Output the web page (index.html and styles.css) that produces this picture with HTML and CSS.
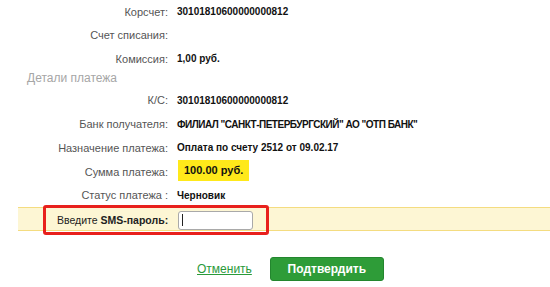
FILE: index.html
```html
<!DOCTYPE html>
<html lang="ru">
<head>
    <meta charset="UTF-8">
    <title>Подтверждение платежа</title>
    <link rel="stylesheet" href="styles.css">
</head>
<body>
    <div class="payment">
        <div class="rows rows-top">
            <div class="label">Корсчет:</div>
            <div class="value">30101810600000000812</div>
            <div class="label">Счет списания:</div>
            <div class="value"></div>
            <div class="label">Комиссия:</div>
            <div class="value">1,00 руб.</div>
        </div>

        <h2 class="section-title">Детали платежа</h2>

        <div class="rows">
            <div class="label">К/С:</div>
            <div class="value">30101810600000000812</div>
            <div class="label">Банк получателя:</div>
            <div class="value value-narrow">ФИЛИАЛ "САНКТ-ПЕТЕРБУРГСКИЙ" АО "ОТП БАНК"</div>
            <div class="label">Назначение платежа:</div>
            <div class="value">Оплата по счету 2512 от 09.02.17</div>
            <div class="label">Сумма платежа:</div>
            <div class="value"><span class="amount">100.00 руб.</span></div>
            <div class="label">Статус платежа :</div>
            <div class="value">Черновик</div>
        </div>

        <div class="sms-band">
            <div class="sms-box">
                <span class="sms-label">Введите <b>SMS-пароль:</b></span>
                <div class="sms-input"><span class="caret"></span></div>
            </div>
        </div>

        <div class="actions">
            <a href="#" class="cancel">Отменить</a>
            <button type="button" class="confirm">Подтвердить</button>
        </div>
    </div>
</body>
</html>
```

FILE: styles.css
```css
body {
    margin: 0;
    font-family: "Liberation Sans", Arial, sans-serif;
    background: #fff;
}
.payment {
    width: 550px;
}
.rows {
    display: grid;
    grid-template-columns: 168px 1fr;
    column-gap: 9px;
    grid-auto-rows: 23.75px;
    align-items: center;
}
.rows-top {
    grid-auto-rows: 23.5px;
}
.label {
    text-align: right;
    font-size: 11px;
    color: #555;
}
.value {
    font-size: 10px;
    font-weight: bold;
    color: #111;
    white-space: nowrap;
}
.value-narrow {
    letter-spacing: -0.5px;
}
.section-title {
    margin: -1px 0 3px 27px;
    font-size: 12px;
    line-height: 16px;
    font-weight: normal;
    color: #a6a6a6;
}
.amount {
    display: inline-block;
    margin-left: 1px;
    padding: 0 6px;
    line-height: 21px;
    font-size: 11px;
    background: #ffe91a;
    position: relative;
    top: -1px;
}
.sms-band {
    margin: 0 0 0 18px;
    height: 22px;
    display: flex;
    align-items: center;
    background: #fdf6d4;
    border-top: 1px solid #f4dc80;
    border-bottom: 1px solid #f4dc80;
}
.sms-box {
    margin-left: 25px;
    margin-top: 2px;
    height: 24px;
    padding: 0 13px 0 11px;
    display: flex;
    align-items: center;
    gap: 10px;
    border: 3px solid #e8201c;
    border-radius: 3px;
    flex-shrink: 0;
}
.sms-label {
    font-size: 10.5px;
    color: #222;
}
.sms-input {
    width: 73px;
    height: 17px;
    border: 1px solid #a9a9a9;
    border-radius: 3px;
    background: #fff;
    display: flex;
    align-items: center;
}
.caret {
    width: 1px;
    height: 12px;
    margin-left: 3px;
    background: #222;
}
.actions {
    display: flex;
    align-items: center;
    margin: 26px 0 0 197px;
    gap: 18px;
}
.cancel {
    font-size: 12px;
    color: #2a9a3a;
    text-decoration: underline;
}
.confirm {
    width: 114px;
    height: 24px;
    border: 1px solid #23862e;
    border-radius: 3px;
    background: #2e9c38;
    color: #fff;
    font-family: "Liberation Sans", Arial, sans-serif;
    font-size: 12px;
    font-weight: bold;
    cursor: pointer;
}
```
